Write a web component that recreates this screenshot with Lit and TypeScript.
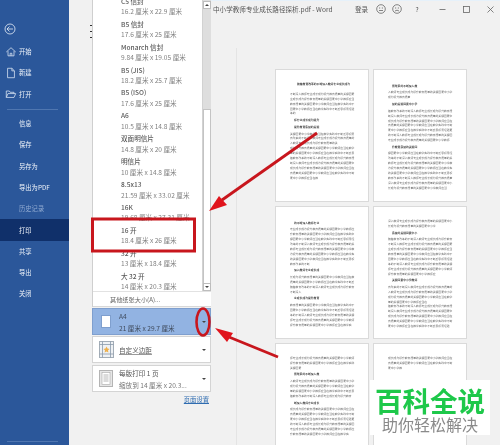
import { LitElement, html, css, svg } from 'lit';
import { customElement } from 'lit/decorators.js';

const NAV_TOP = [
  { label: '开始', icon: 'home' },
  { label: '新建', icon: 'file' },
  { label: '打开', icon: 'open' },
];
const NAV_MAIN = [
  { label: '信息' },
  { label: '保存' },
  { label: '另存为' },
  { label: '导出为PDF' },
  { label: '历史记录', dim: true },
  { label: '打印', active: true },
  { label: '共享' },
  { label: '导出' },
  { label: '关闭' },
];

const SIZES = [
  ['C5 信封', '16.2 厘米 x 22.9 厘米'],
  ['B5 信封', '17.6 厘米 x 25 厘米'],
  ['Monarch 信封', '9.84 厘米 x 19.05 厘米'],
  ['B5 (JIS)', '18.2 厘米 x 25.7 厘米'],
  ['B5 (ISO)', '17.6 厘米 x 25 厘米'],
  ['A6', '10.5 厘米 x 14.8 厘米'],
  ['双面明信片', '14.8 厘米 x 20 厘米'],
  ['明信片', '10 厘米 x 14.8 厘米'],
  ['8.5x13', '21.59 厘米 x 33.02 厘米'],
  ['16K', '19.68 厘米 x 27.31 厘米'],
  ['16 开', '18.4 厘米 x 26 厘米'],
  ['32 开', '13 厘米 x 18.4 厘米'],
  ['大 32 开', '14 厘米 x 20.3 厘米'],
];

const BODY =
  '随着教育改革的不断深入教师专业成长成为提升教育质量的关键因素中小学教师应当在教学实践中不断反思积累经验更新教育观念提高专业能力形成自身的教学风格';

// h = heading line, t = page title, number = body line width in px
type Line = number | 'h' | 't';
const para = (n: number, last = 40): Line[] => [...Array(n - 1).fill(67), last];

const PAGES: Line[][] = [
  ['t', ...para(5, 8), 'h', 'h', ...para(3, 50), ...para(7, 30)],
  ['h', ...para(2, 24), 'h', ...para(7, 62), 'h', ...para(8, 60)],
  ['h', ...para(8, 20), 'h', ...para(4, 12), 'h', ...para(5, 62)],
  [...para(2, 50), 'h', ...para(8, 50), 'h', ...para(4, 40), ...para(5, 64)],
  [...para(3, 12), 'h', ...para(4, 62), 'h', ...para(6, 60)],
  [...para(3, 14)],
];

const ICONS: Record<string, unknown> = {
  home: svg`<path d="M1.5 7 L7 2 L12.5 7 M3.5 6 V11.5 H10.5 V6 M6 11.5 V8.5 H8 V11.5" />`,
  file: svg`<path d="M3 1.5 H8 L11 4.5 V12.5 H3 Z M8 1.5 V4.5 H11" />`,
  open: svg`<path d="M1.5 11 V3.5 H5 L6 5 H10.5 V6.5 M1.5 11 L3.5 6.5 H12.5 L10.5 11 Z" />`,
};

@customElement('app-root')
export class AppRoot extends LitElement {
  static styles = css`
    :host {
      display: flex;
      width: 500px;
      height: 445px;
      overflow: hidden;
      position: relative;
      background: #f1f1f1;
      font-family: 'Noto Sans CJK SC', 'Liberation Sans', sans-serif;
      font-size: 6.6px;
      color: #555;
      filter: blur(0.45px);
    }

    .sidebar {
      width: 69px;
      flex: none;
      background: #2b579a;
      color: #f0f4fa;
      display: flex;
      flex-direction: column;
      padding-top: 23px;
      box-sizing: border-box;
      font-size: 6.3px;
    }
    .back {
      width: 12px;
      height: 12px;
      margin: 0 0 6px 4px;
      display: block;
    }
    .nav-row {
      height: 21.3px;
      display: flex;
      align-items: center;
      padding-left: 19px;
      flex: none;
      position: relative;
    }
    .nav-row svg {
      position: absolute;
      left: 5px;
      width: 12px;
      height: 12px;
      fill: none;
      stroke: #dbe5f3;
      stroke-width: 0.9;
    }
    .nav-row.dim {
      color: #8fa9d0;
    }
    .nav-row.active {
      background: #10306a;
    }
    .sep {
      height: 1px;
      background: #4f76b0;
      margin: 4px 11px 3px 7px;
      flex: none;
    }
    .spacer {
      flex: 1;
    }
    .sep.bottom {
      margin-bottom: 3px;
    }

    .gutter {
      width: 23px;
      flex: none;
      display: flex;
      justify-content: flex-end;
    }
    .gutter svg {
      width: 2px;
      height: 16px;
      margin-top: 24px;
    }

    .settings {
      width: 119px;
      flex: none;
      display: flex;
      flex-direction: column;
    }
    .dropdown {
      background: #fff;
      border-left: 1px solid #cfcfcf;
      box-sizing: border-box;
      margin-bottom: 1px;
    }
    .list-wrap {
      height: 292px;
      display: flex;
      overflow: hidden;
      border-bottom: 1px solid #e2e2e2;
      box-sizing: border-box;
    }
    .list {
      flex: 1;
      overflow: hidden;
      padding-left: 28px;
    }
    .list-inner {
      margin-top: -5px;
    }
    .item {
      height: 22.9px;
      display: flex;
      flex-direction: column;
      justify-content: center;
      white-space: nowrap;
      line-height: 10.6px;
    }
    .item b {
      font-weight: 500;
      color: #5a5a5a;
    }
    .item span {
      color: #808080;
    }
    .scroll {
      width: 8px;
      flex: none;
      background: #dedede;
      display: flex;
      flex-direction: column;
      border-left: 1px solid #d2d2d2;
    }
    .scroll-btn {
      height: 8px;
      flex: none;
      background: #fff;
      border: 1px solid #bdbdbd;
      box-sizing: border-box;
      display: flex;
      align-items: center;
      justify-content: center;
    }
    .scroll-btn.up {
      margin-top: 1px;
    }
    .scroll-gap {
      height: 100px;
      flex: none;
    }
    .thumb {
      flex: 1;
      background: #fff;
      border: 1px solid #c4c4c4;
      border-width: 1px 1px 0;
    }
    .tri-up,
    .tri-down {
      width: 0;
      height: 0;
      border-left: 2px solid transparent;
      border-right: 2px solid transparent;
    }
    .tri-up {
      border-bottom: 2px solid #444;
    }
    .tri-down {
      border-top: 2px solid #444;
    }
    .more {
      height: 14px;
      display: flex;
      align-items: center;
      padding-left: 17px;
      font-size: 6.2px;
      color: #666;
      white-space: nowrap;
      border-bottom: 1px solid #d8d8d8;
    }

    .card {
      height: 27px;
      flex: none;
      display: flex;
      align-items: center;
      box-sizing: border-box;
      background: #fff;
      border: 1px solid #d4d4d4;
      margin-bottom: 1px;
      padding-right: 4px;
    }
    .card.selected {
      background: #92b3e2;
      border-color: #7f9fce;
      color: #3f4a5c;
    }
    .card.third {
      margin-top: 1px;
    }
    .card-icon {
      width: 26px;
      flex: none;
      display: flex;
      justify-content: center;
    }
    .card-text {
      flex: 1;
      display: flex;
      flex-direction: column;
      gap: 2px;
      line-height: 10px;
      white-space: nowrap;
      overflow: hidden;
    }
    .card-text u {
      text-decoration-color: #999;
    }
    .card-text.sub span:last-child {
      color: #777;
    }
    .setup {
      align-self: flex-end;
      margin: 2px 2px 0 0;
      font-size: 6.3px;
      color: #2f6cb0;
      text-decoration: underline;
      line-height: 10px;
    }

    .right {
      flex: 1;
      display: flex;
      flex-direction: column;
      min-width: 0;
    }
    .titlebar {
      height: 17px;
      flex: none;
      display: flex;
      align-items: center;
      padding-left: 2px;
      color: #555;
      border-top: 1px solid #e6f1fa;
      box-sizing: border-box;
      white-space: nowrap;
      font-size: 6.6px;
    }
    .title {
      width: 142px;
      flex: none;
    }
    .tb-login {
      width: 18px;
      flex: none;
    }
    .tb-icon {
      width: 16px;
      height: 10px;
      flex: none;
      display: flex;
      justify-content: center;
    }
    .tb-icon svg {
      width: 10px;
      height: 10px;
      fill: none;
      stroke: #666;
      stroke-width: 0.8;
    }
    .tb-win {
      width: 24px;
      flex: none;
      display: flex;
      justify-content: center;
      color: #666;
    }
    .tb-win svg {
      width: 7px;
      height: 7px;
      fill: none;
      stroke: #666;
      stroke-width: 0.8;
    }
    .tb-help {
      margin: 0 3px 0 2px;
      width: 20px;
      flex: none;
      text-align: center;
    }

    .preview {
      flex: 1;
      padding: 52px 0 0 64px;
      display: grid;
      grid-template-columns: 94px 94px;
      grid-auto-rows: 133px;
      gap: 4px;
      overflow: hidden;
      background: linear-gradient(#e4e4e4, #e4e4e4) no-repeat 25px 31px / 1px 100%;
    }
    .page {
      background: #fff;
      border: 1px solid #dadada;
      box-sizing: border-box;
      padding: 12px 11px 0 14px;
      overflow: hidden;
      font-size: 2.8px;
      color: #6a6a6a;
    }
    .line {
      height: 4.9px;
      line-height: 4.9px;
      white-space: nowrap;
    }
    .line.h {
      margin: 1.8px 0;
      font-weight: 700;
      padding-left: 4px;
      color: #444;
    }
    .line.t {
      margin: 0 0 5px 7px;
      font-weight: 700;
      color: #444;
    }

    .watermark {
      position: absolute;
      left: 370px;
      top: 380px;
      width: 120px;
      height: 55px;
      background: #fff;
      display: flex;
      flex-direction: column;
      align-items: center;
    }
    .wm-main {
      color: #1ec84a;
      font-size: 27.5px;
      font-weight: 700;
      line-height: 30px;
      margin-top: 5px;
      white-space: nowrap;
    }
    .wm-sub {
      color: #8a8a8a;
      font-size: 16px;
      line-height: 18px;
      white-space: nowrap;
    }

    .marks {
      position: absolute;
      inset: 0;
      width: 500px;
      height: 445px;
      pointer-events: none;
    }
  `;

  private renderNavRow(row: { label: string; icon?: string; dim?: boolean; active?: boolean }) {
    const cls = `nav-row${row.dim ? ' dim' : ''}${row.active ? ' active' : ''}`;
    return html`<div class=${cls}>
      ${row.icon ? html`<svg viewBox="0 0 14 14">${ICONS[row.icon]}</svg>` : ''}${row.label}
    </div>`;
  }

  private renderPage(lines: Line[], idx: number) {
    return html`<div class="page">
      ${lines.map((l, i) => {
        const text = (s: number) => (BODY + BODY).substr((i * 7 + idx * 3) % 30, s);
        if (l === 'h') return html`<div class="line h">${text(9)}</div>`;
        if (l === 't') return html`<div class="line t">${text(19)}</div>`;
        return html`<div class="line">${text(Math.floor(l / 2.8))}</div>`;
      })}
    </div>`;
  }

  render() {
    return html`
      <nav class="sidebar">
        <svg class="back" viewBox="0 0 12 12" fill="none" stroke="#e6edf7" stroke-width="0.8">
          <circle cx="6" cy="6" r="5" />
          <path d="M3 6 H9 M5.5 3.5 L3 6 L5.5 8.5" />
        </svg>
        ${NAV_TOP.map((r) => this.renderNavRow(r))}
        <div class="sep"></div>
        ${NAV_MAIN.map((r) => this.renderNavRow(r))}
        <div class="spacer"></div>
        <div class="sep bottom"></div>
      </nav>

      <div class="gutter">
        <svg viewBox="0 0 2 16"><path d="M0 1h2v1H0zM0 7h2v1H0zM0 13h2v1H0z" fill="#333" /></svg>
      </div>

      <section class="settings">
        <div class="dropdown">
          <div class="list-wrap">
            <div class="list">
              <div class="list-inner">
                ${SIZES.map(
                  ([name, dims]) => html`<div class="item"><b>${name}</b><span>${dims}</span></div>`
                )}
              </div>
            </div>
            <div class="scroll">
              <div class="scroll-btn up"><div class="tri-up"></div></div>
              <div class="scroll-gap"></div>
              <div class="thumb"></div>
              <div class="scroll-btn"><div class="tri-down"></div></div>
            </div>
          </div>
          <div class="more">其他纸张大小(A)...</div>
        </div>

        <div class="card selected">
          <div class="card-icon">
            <svg width="10" height="13"><rect x="0.5" y="0.5" width="9" height="12" fill="#fff" stroke="#7f9fce" /></svg>
          </div>
          <div class="card-text"><span>A4</span><span>21 厘米 x 29.7 厘米</span></div>
          <div class="tri-down"></div>
        </div>
        <div class="card">
          <div class="card-icon">
            <svg width="15" height="17" viewBox="0 0 15 17">
              <rect x="0.5" y="0.5" width="14" height="16" fill="#eef1f4" stroke="#a3adb7" />
              <path d="M3.5 0.5 V16.5 M11.5 0.5 V16.5 M0.5 3.5 H14.5 M0.5 13 H14.5" stroke="#8a9aab" stroke-width="0.8" fill="none" />
              <path d="M7.5 5.5 L8.5 7.6 L10.6 7.9 L9 9.3 L9.4 11.4 L7.5 10.4 L5.6 11.4 L6 9.3 L4.4 7.9 L6.5 7.6 Z" fill="#eeb04c" />
            </svg>
          </div>
          <div class="card-text"><u>自定义边距</u></div>
          <div class="tri-down"></div>
        </div>
        <div class="card third">
          <div class="card-icon">
            <svg width="14" height="17" viewBox="0 0 14 17">
              <rect x="0.5" y="0.5" width="13" height="16" fill="#e6e6e6" stroke="#b4b4b4" />
              <rect x="3" y="2.5" width="8" height="12" fill="#fff" stroke="#a8a8a8" stroke-width="0.6" />
              <path d="M4.5 5 H9.5 M4.5 7 H9.5 M4.5 9 H9.5 M4.5 11 H9.5" stroke="#999" stroke-width="0.7" />
            </svg>
          </div>
          <div class="card-text sub"><span>每版打印 1 页</span><span>缩放到 14 厘米 x 20.3...</span></div>
          <div class="tri-down"></div>
        </div>
        <div class="setup">页面设置</div>
      </section>

      <section class="right">
        <header class="titlebar">
          <div class="title">中小学教师专业成长路径探析.pdf - Word</div>
          <div class="tb-login">登录</div>
          <div class="tb-icon">
            <svg viewBox="0 0 10 10"><circle cx="5" cy="5" r="4.3" /><path d="M3 4 H4.2 M5.8 4 H7 M3 6.5 H7" /></svg>
          </div>
          <div class="tb-icon">
            <svg viewBox="0 0 10 10"><circle cx="5" cy="5" r="4.3" /><path d="M3 4 H4.2 M5.8 4 H7 M3 7 Q5 5.3 7 7" /></svg>
          </div>
          <div class="tb-help">?</div>
          <div class="tb-win"><svg viewBox="0 0 7 7"><path d="M0.5 3.5 H6.5" /></svg></div>
          <div class="tb-win"><svg viewBox="0 0 7 7"><rect x="0.5" y="0.5" width="6" height="6" /></svg></div>
          <div class="tb-win"><svg viewBox="0 0 7 7"><path d="M0.5 0.5 L6.5 6.5 M6.5 0.5 L0.5 6.5" /></svg></div>
        </header>
        <div class="preview">${PAGES.map((p, i) => this.renderPage(p, i))}</div>
      </section>

      <div class="watermark">
        <div class="wm-main">百科全说</div>
        <div class="wm-sub">助你轻松解决</div>
      </div>

      <svg class="marks" viewBox="0 0 500 445" fill="none">
        <rect x="92.5" y="219" width="102" height="32" stroke="#c8161d" stroke-width="3" />
        <ellipse cx="203" cy="322" rx="6.5" ry="13.5" stroke="#c8161d" stroke-width="2.6" />
        <path d="M317 133 L222 200" stroke="#c8161d" stroke-width="2.8" />
        <path d="M209 211 L219 196 L227 205 Z" fill="#e0141c" />
        <path d="M278 357 L229 337" stroke="#c8161d" stroke-width="2.8" />
        <path d="M215 328 L233 333 L227 342 Z" fill="#e0141c" />
      </svg>
    `;
  }
}
